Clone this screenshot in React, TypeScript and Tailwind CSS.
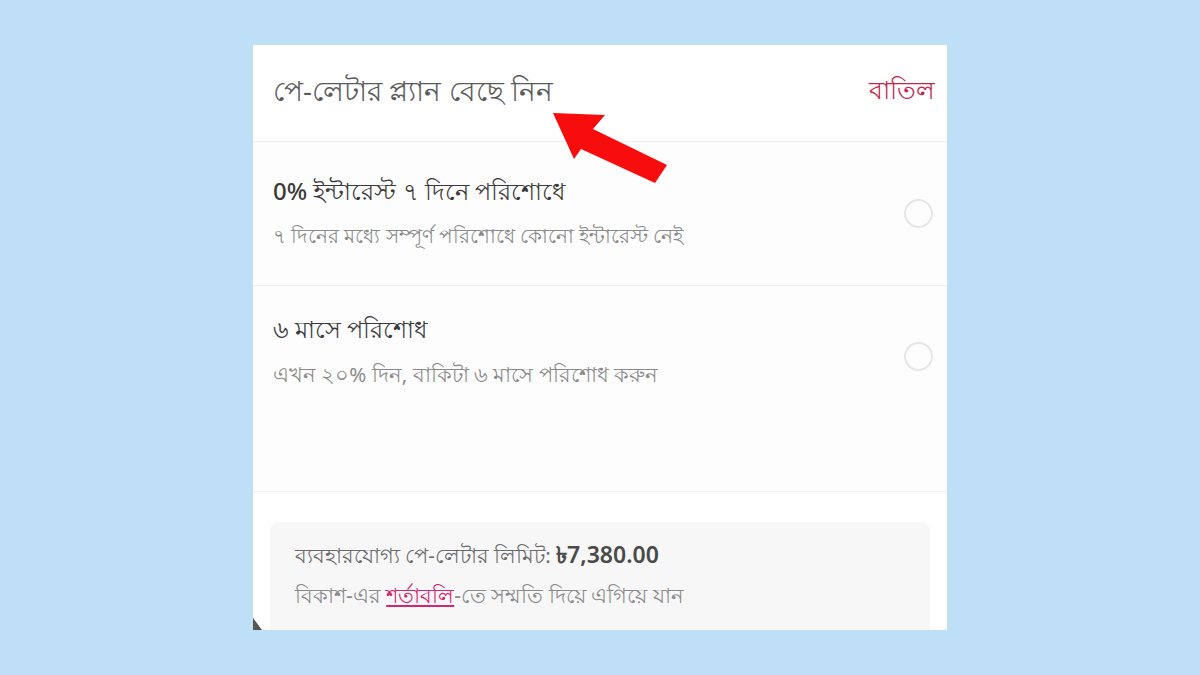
export default function App() {
  return (
    <div className="flex h-[675px] w-[1200px] justify-center bg-[#bfdff6] pt-[45px] font-['Noto_Sans','Liberation_Sans',sans-serif]">
      <div className="relative flex h-[585px] w-[694px] flex-col overflow-hidden bg-white">
        {/* HEADER */}
        <div className="flex h-[97px] items-center justify-between border-b border-[#f0f0f0] pl-[20px] pr-[12px] pb-[6px]">
          <span className="text-[28px] text-[#5b5b5b]">পে-লেটার প্ল্যান বেছে নিন</span>
          <span className="text-[25px] text-[#c4264d]">বাতিল</span>
        </div>

        {/* OPTION 1 */}
        <div className="flex h-[144px] items-center justify-between border-b border-[#f0f0f0] bg-[#fdfdfd] pl-[20px] pr-[14px]">
          <div className="flex flex-col gap-[12px] pb-[4px]">
            <span className="text-[24px] font-medium text-[#3a3a3a]">0% ইন্টারেস্ট ৭ দিনে পরিশোধে</span>
            <span className="text-[20px] text-[#8a8a8a]">৭ দিনের মধ্যে সম্পূর্ণ পরিশোধে কোনো ইন্টারেস্ট নেই</span>
          </div>
          <span className="h-[29px] w-[29px] rounded-full border-2 border-[#e6e6e6]" />
        </div>

        {/* OPTION 2 */}
        <div className="flex h-[206px] items-start justify-between border-b border-[#f0f0f0] bg-[#fdfdfd] pl-[20px] pr-[14px] pt-[25px]">
          <div className="flex flex-col gap-[12px]">
            <span className="text-[24px] font-medium text-[#3a3a3a]">৬ মাসে পরিশোধ</span>
            <span className="text-[20.5px] text-[#8a8a8a]">এখন ২০% দিন, বাকিটা ৬ মাসে পরিশোধ করুন</span>
          </div>
          <span className="mt-[31px] h-[29px] w-[29px] rounded-full border-2 border-[#e6e6e6]" />
        </div>

        {/* FOOTER */}
        <div className="flex-1 px-[17px] pt-[30px]">
          <div className="flex h-full flex-col gap-[8px] rounded-t-[8px] bg-[#f7f7f8] px-[25px] pt-[15px]">
            <span className="text-[20.5px] text-[#6a6a6a]">
              ব্যবহারযোগ্য পে-লেটার লিমিট: <span className="text-[23px] font-semibold text-[#4a4a4a]">৳7,380.00</span>
            </span>
            <span className="text-[21px] text-[#8a8a8a]">
              বিকাশ-এর <span className="text-[#d6246e] underline">শর্তাবলি</span>-তে সম্মতি দিয়ে এগিয়ে যান
            </span>
          </div>
        </div>

        <svg className="absolute bottom-0 left-0" width="12" height="12" viewBox="0 0 12 12">
          <path d="M0 0 L9 12 L0 12 Z" fill="#555" />
        </svg>

        {/* ARROW */}
        <svg className="absolute left-[290px] top-[62px]" width="130" height="80" viewBox="0 0 130 80">
          <path d="M10 6 L62 8 L50 22 L124 58 L112 76 L38 42 L31 52 Z" fill="#f70d0d" />
        </svg>
      </div>
    </div>
  );
}
